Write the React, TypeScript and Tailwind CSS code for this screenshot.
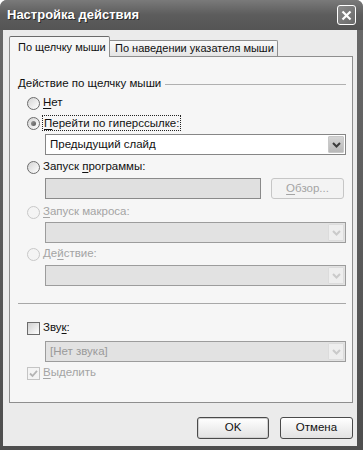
import React from "react";

const Radio = ({ checked = false, disabled = false }: { checked?: boolean; disabled?: boolean }) => (
  <span
    className={`w-[13px] h-[13px] rounded-full border flex items-center justify-center shrink-0 ${
      disabled ? "border-[#c8c8c8] bg-[#f4f4f4]" : "border-[#6c6c6c] bg-gradient-to-br from-[#d4d4d4] to-white"
    }`}
  >
    {checked && <span className="w-[5px] h-[5px] rounded-full bg-gradient-to-br from-[#9a9a9a] to-[#5a5a5a]" />}
  </span>
);

const Check = ({ checked = false, disabled = false }: { checked?: boolean; disabled?: boolean }) => (
  <span
    className={`w-[13px] h-[13px] border flex items-center justify-center shrink-0 ${
      disabled ? "border-[#c4c4c4] bg-[#f4f4f4]" : "border-[#6c6c6c] bg-gradient-to-br from-[#d0d0d0] to-white"
    }`}
  >
    {checked && (
      <svg width="9" height="9" viewBox="0 0 9 9">
        <path d="M1 4.5 L3.5 7 L8 1.8" fill="none" stroke={disabled ? "#b4b4b4" : "#333"} strokeWidth="1.8" />
      </svg>
    )}
  </span>
);

const Arrow = ({ disabled = false }: { disabled?: boolean }) => (
  <span
    className={`w-[16px] h-[17px] mr-[1px] flex items-center justify-center rounded-[1px] ${
      disabled ? "bg-[#eeeeee] border border-[#dcdcdc]" : "bg-gradient-to-b from-[#d4d4d4] to-[#b8b8b8] border border-[#c8c8c8]"
    }`}
  >
    <svg width="9" height="6" viewBox="0 0 9 6">
      <path d="M1 1 L4.5 4.5 L8 1" fill="none" stroke={disabled ? "#cacaca" : "#3c3c3c"} strokeWidth="2" />
    </svg>
  </span>
);

const Combo = ({ text = "", disabled = false }: { text?: string; disabled?: boolean }) => (
  <div
    className={`h-[21px] border flex items-center ${
      disabled ? "border-[#9c9c9c] bg-[#e2e2e2] text-[#9a9a9a]" : "border-[#868686] bg-white text-[#111]"
    }`}
  >
    <span className="flex-1 pl-[4px] whitespace-nowrap">{text}</span>
    <Arrow disabled={disabled} />
  </div>
);

const U = ({ children }: { children: React.ReactNode }) => <span className="underline underline-offset-2">{children}</span>;

export default function App() {
  return (
    <div
      className="w-[363px] h-[450px] flex flex-col bg-gradient-to-b from-[#6a6a6a] to-[#4e4e4e] rounded-t-[7px] overflow-hidden text-[11.5px] text-[#111] whitespace-nowrap"
      style={{ fontFamily: '"Liberation Sans", Arial, sans-serif' }}
    >
      {/* title bar */}
      <div className="h-[30px] flex items-center justify-between pl-[7px] pr-[7px] shrink-0 bg-gradient-to-b from-[#7a7a7a] via-[#5c5c5c] to-[#555]">
        <span className="text-white font-bold text-[13px] [text-shadow:1px_1px_#2a2a2a]">Настройка действия</span>
        <span className="w-[19px] h-[20px] rounded-[3px] border border-white bg-gradient-to-br from-[#8a8a8a] to-[#6a6a6a] flex items-center justify-center">
          <svg width="11" height="11" viewBox="0 0 11 11">
            <path d="M1.5 1.5 L9.5 9.5 M9.5 1.5 L1.5 9.5" stroke="white" strokeWidth="2.2" />
          </svg>
        </span>
      </div>

      {/* body */}
      <div className="flex-1 ml-[3px] mr-[6px] mb-[4px] bg-[#ebebeb] flex flex-col pl-[6px] pr-[4px] pt-[6px]">
        {/* tabs */}
        <div className="flex items-end h-[20px] relative z-10 text-[11px]">
          <div className="h-[21px] w-[101px] -mb-[1px] border border-b-0 border-[#8e8e8e] border-t-[#6a6a6a] rounded-t-[2px] bg-[#f6f6f6] pl-[8px] pt-[4px] leading-[13px]">
            По щелчку мыши
          </div>
          <div className="h-[16px] w-[168px] border border-l-0 border-b-0 border-[#8e8e8e] rounded-tr-[2px] bg-gradient-to-b from-[#fafafa] to-[#e4e4e4] pl-[5px] leading-[15px]">
            По наведении указателя мыши
          </div>
        </div>

        {/* panel */}
        <div className="h-[347px] w-[344px] border border-[#8e8e8e] bg-[#f6f6f6] flex flex-col pl-[8px] pr-[6px]">
          <div className="h-[16px] mt-[19px] flex items-center gap-[4px]">
            <span>Действие по щелчку мыши</span>
            <span className="flex-1 h-px bg-[#b0b0b0] mt-[1px]" />
          </div>

          <div className="h-[14px] mt-[4px] ml-[9px] flex items-center gap-[3px]">
            <Radio />
            <span>
              <U>Н</U>ет
            </span>
          </div>

          <div className="h-[16px] mt-[5px] ml-[9px] flex items-center gap-[2px]">
            <Radio checked />
            <span className="border border-dotted border-[#222] px-[1px] leading-[14px]">
              <U>П</U>ерейти по гиперссылке:
            </span>
          </div>

          <div className="mt-[3px] ml-[27px]">
            <Combo text="Предыдущий слайд" />
          </div>

          <div className="h-[14px] mt-[5px] ml-[9px] flex items-center gap-[3px]">
            <Radio />
            <span>
              Запуск <U>п</U>рограммы:
            </span>
          </div>

          <div className="h-[21px] mt-[4px] ml-[27px] flex gap-[10px]">
            <div className="w-[216px] h-[21px] border border-[#8a8a8a] bg-[#e0e0e0]" />
            <div className="w-[73px] h-[21px] rounded-[3px] border border-[#c6c6c6] bg-[#f3f3f3] text-[#a4a4a4] flex items-center justify-center">
              <span>
                <U>О</U>бзор...
              </span>
            </div>
          </div>

          <div className="h-[14px] mt-[6px] ml-[9px] flex items-center gap-[3px] text-[#a4a4a4]">
            <Radio disabled />
            <span>
              <U>З</U>апуск макроса:
            </span>
          </div>

          <div className="mt-[3px] ml-[27px]">
            <Combo disabled />
          </div>

          <div className="h-[14px] mt-[4px] ml-[9px] flex items-center gap-[3px] text-[#a4a4a4]">
            <Radio disabled />
            <span>
              Де<U>й</U>ствие:
            </span>
          </div>

          <div className="mt-[4px] ml-[27px]">
            <Combo disabled />
          </div>

          <div className="h-px mt-[17px] bg-[#a8a8a8]" />

          <div className="h-[14px] mt-[17px] ml-[9px] flex items-center gap-[3px]">
            <Check />
            <span>
              Зву<U>к</U>:
            </span>
          </div>

          <div className="mt-[6px] ml-[27px]">
            <Combo text="[Нет звука]" disabled />
          </div>

          <div className="h-[14px] mt-[4px] ml-[9px] flex items-center gap-[3px] text-[#a4a4a4]">
            <Check checked disabled />
            <span>
              <U>В</U>ыделить
            </span>
          </div>
        </div>

        {/* buttons */}
        <div className="flex justify-end gap-[11px] mt-[14px]">
          <button className="w-[72px] h-[22px] rounded-[3px] border border-[#4a4a4a] bg-gradient-to-b from-white to-[#e2e2e2] shadow-[inset_0_0_0_1px_#d0d0d0]">
            OK
          </button>
          <button className="w-[73px] h-[22px] rounded-[3px] border border-[#4a4a4a] bg-gradient-to-b from-white to-[#e2e2e2]">
            Отмена
          </button>
        </div>
      </div>
    </div>
  );
}
